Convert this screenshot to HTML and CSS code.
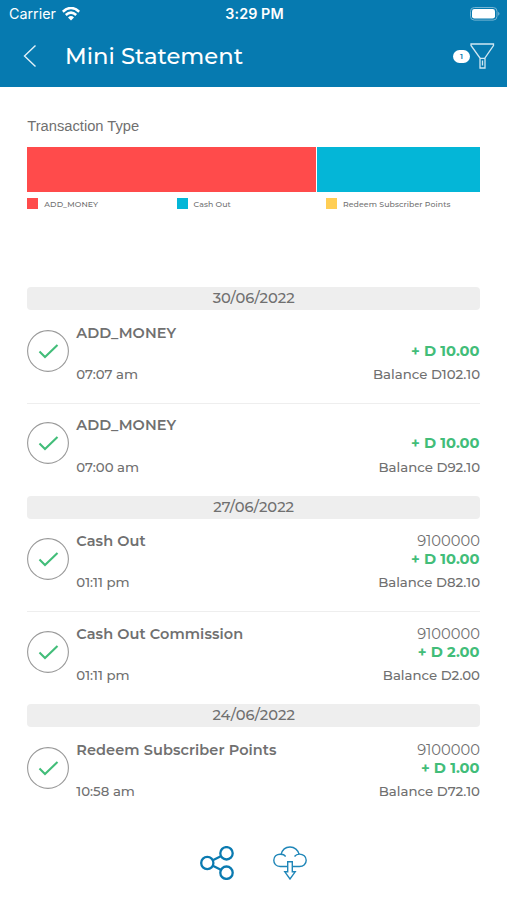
FILE: index.html
```html
<!DOCTYPE html>
<html lang="en">
<head>
<meta charset="utf-8">
<title>Mini Statement</title>
<link rel="stylesheet" href="styles.css">
</head>
<body>

<header class="header">
  <div class="status">
    <div class="carrier">
      <span>Carrier</span>
      <svg width="18" height="14" viewBox="0 0 18 14" fill="none" stroke="#fff" stroke-width="2.5"><path d="M.8 4.7Q9-2.7 17.2 4.7M3.8 8Q9 3.2 14.2 8"/><path d="M6 10.4Q9 7.8 12 10.4L9 13.5Z" fill="#fff" stroke="none"/></svg>
    </div>
    <span class="clock">3:29 PM</span>
    <svg class="battery" width="30" height="14" viewBox="0 0 30 14"><rect x=".5" y=".5" width="26.5" height="12.6" rx="3.8" fill="none" stroke="#75b5d3"/><rect x="2" y="2" width="23" height="9.6" rx="2.4" fill="#fff"/><path d="M28.2 4.8q2.6 2 0 4z" fill="#75b5d3"/></svg>
  </div>
  <div class="titlebar">
    <svg class="back" width="14" height="24" viewBox="0 0 14 24" fill="none" stroke="#e2f1f8" stroke-width="1.4"><path d="M12.5 1.5 1.5 12l11 10.5"/></svg>
    <h1>Mini Statement</h1>
    <div class="filter">
      <span class="count">1</span>
      <svg width="25" height="26" viewBox="0 0 25 26" fill="none" stroke="#d0e7f2" stroke-width="1.3"><path d="M1 1h22.5v1.5L15 15v10h-5V15L1 2.5zM10 15.3h5M12.5 17.5v5"/></svg>
    </div>
  </div>
</header>

<main class="content">
  <section class="chart">
    <h2>Transaction Type</h2>
    <div class="bar">
      <div class="segment red" style="width:288.5px"></div>
      <div class="segment cyan" style="width:163px"></div>
    </div>
    <ul class="legend">
      <li><i class="swatch red"></i><span>ADD_MONEY</span></li>
      <li><i class="swatch cyan"></i><span>Cash Out</span></li>
      <li><i class="swatch yellow"></i><span>Redeem Subscriber Points</span></li>
    </ul>
  </section>

  <section class="day">
    <div class="date">30/06/2022</div>
    <div class="row">
      <svg class="check" viewBox="0 0 42 42"><circle cx="21" cy="21" r="20.4"/><path d="m12.5 21.5 5.5 5.5L30.5 15"/></svg>
      <div class="info"><b class="name">ADD_MONEY</b><span class="time">07:07 am</span></div>
      <div class="sums"><span class="phone"></span><b class="amount">+ D 10.00</b><span class="balance">Balance D102.10</span></div>
    </div>
    <div class="row">
      <svg class="check" viewBox="0 0 42 42"><circle cx="21" cy="21" r="20.4"/><path d="m12.5 21.5 5.5 5.5L30.5 15"/></svg>
      <div class="info"><b class="name">ADD_MONEY</b><span class="time">07:00 am</span></div>
      <div class="sums"><span class="phone"></span><b class="amount">+ D 10.00</b><span class="balance">Balance D92.10</span></div>
    </div>
  </section>

  <section class="day">
    <div class="date">27/06/2022</div>
    <div class="row">
      <svg class="check" viewBox="0 0 42 42"><circle cx="21" cy="21" r="20.4"/><path d="m12.5 21.5 5.5 5.5L30.5 15"/></svg>
      <div class="info"><b class="name">Cash Out</b><span class="time">01:11 pm</span></div>
      <div class="sums"><span class="phone">9100000</span><b class="amount">+ D 10.00</b><span class="balance">Balance D82.10</span></div>
    </div>
    <div class="row">
      <svg class="check" viewBox="0 0 42 42"><circle cx="21" cy="21" r="20.4"/><path d="m12.5 21.5 5.5 5.5L30.5 15"/></svg>
      <div class="info"><b class="name">Cash Out Commission</b><span class="time">01:11 pm</span></div>
      <div class="sums"><span class="phone">9100000</span><b class="amount">+ D 2.00</b><span class="balance">Balance D2.00</span></div>
    </div>
  </section>

  <section class="day">
    <div class="date">24/06/2022</div>
    <div class="row">
      <svg class="check" viewBox="0 0 42 42"><circle cx="21" cy="21" r="20.4"/><path d="m12.5 21.5 5.5 5.5L30.5 15"/></svg>
      <div class="info"><b class="name">Redeem Subscriber Points</b><span class="time">10:58 am</span></div>
      <div class="sums"><span class="phone">9100000</span><b class="amount">+ D 1.00</b><span class="balance">Balance D72.10</span></div>
    </div>
  </section>
</main>

<footer class="actions">
  <svg width="34" height="34" viewBox="0 0 34 34" fill="none" stroke="#0a7ab0" stroke-width="2.3"><circle cx="7.3" cy="17" r="6.1"/><circle cx="26.5" cy="7.3" r="6.2"/><circle cx="26.5" cy="26.7" r="6.2"/><path d="m12.8 14.2 8-4M12.8 19.8l8 4"/></svg>
  <svg width="34" height="34" viewBox="0 0 34 34" fill="none" stroke="#1f86b8" stroke-width="1.4"><path d="M14 20.5H7.2C3 20.5.8 17.6.8 14.2c0-3.6 2.8-6 6.3-6 .9 0 1.8.2 2.5.5M8.2 8.4C9.2 4 12.6 1 17 1c4.6 0 8.2 3.2 9 7.2M21.5 10.5c1.2-1.6 3-2.4 5-2.4 3.7 0 6.7 2.5 6.7 6.1 0 3.5-2.7 6.3-6.7 6.3H20M8 8.3c2 0 3.6.8 4.7 2.2"/><path d="M14.7 15.8h4.6v10h2.9L17 33l-5.2-7.2h2.9z"/></svg>
</footer>

</body>
</html>
```
FILE: styles.css
```css
body {
  margin: 0;
  background: #fff;
  color: #707070;
  font-family: "Montserrat", Inter, sans-serif;
}
h1, h2, ul {
  margin: 0;
  padding: 0;
  font-weight: normal;
}
svg {
  display: block;
  flex: none;
}

/* header */
.header {
  height: 86.5px;
  background: #067ab0;
  color: #fff;
}
.status {
  display: grid;
  grid-template-columns: 1fr auto 1fr;
  align-items: center;
  height: 27px;
  padding: 0 7px 0 9px;
  font-family: Inter, sans-serif;
  font-size: 14.3px;
}
.carrier {
  display: flex;
  align-items: center;
  gap: 6px;
}
.clock {
  font-weight: 600;
  letter-spacing: .1px;
}
.battery {
  justify-self: end;
}
.titlebar {
  display: flex;
  align-items: center;
  height: 58px;
  padding: 0 12px 0 23px;
}
.titlebar h1 {
  flex: 1;
  margin-left: 28px;
  font-size: 22.7px;
  font-weight: 500;
  line-height: 30px;
}
.filter {
  display: flex;
  align-items: center;
}
.count {
  width: 17px;
  height: 13px;
  border-radius: 7px;
  background: #fff;
  color: #067ab0;
  font-size: 8px;
  font-weight: 600;
  line-height: 13px;
  text-align: center;
}

/* chart */
.content {
  padding: 0 27px 0 27.3px;
}
.chart {
  height: 200.5px;
  box-sizing: border-box;
  padding-top: 31px;
}
.chart h2 {
  font-family: "Liberation Sans", Arial, sans-serif;
  font-size: 14.7px;
  line-height: 17px;
}
.bar {
  display: flex;
  justify-content: space-between;
  height: 45px;
  margin-top: 12px;
}
.red { background: #ff4b4b; }
.cyan { background: #04b6d7; }
.yellow { background: #ffce54; }
.legend {
  display: grid;
  grid-template-columns: repeat(3, 149.3px);
  margin-top: 6px;
  list-style: none;
  font-size: 7.8px;
  font-weight: 500;
  line-height: 12px;
  letter-spacing: .1px;
}
.legend li {
  display: flex;
  align-items: center;
  gap: 6px;
  white-space: nowrap;
}
.swatch {
  width: 11px;
  height: 11px;
}

/* statement */
.date {
  height: 23px;
  border-radius: 4px;
  background: #eee;
  font-size: 14.7px;
  font-weight: 500;
  line-height: 23px;
  text-align: center;
}
.row {
  display: flex;
  height: 92.8px;
  box-sizing: border-box;
  padding-top: 13.6px;
}
.row + .row {
  border-top: 1px solid #eee;
  padding-top: 12.6px;
}
.check {
  width: 42px;
  height: 42px;
  margin-top: 6px;
  fill: none;
}
.check circle {
  stroke: #999;
  stroke-width: 1.1;
}
.check path {
  stroke: #42bd79;
  stroke-width: 2.1;
}
.info, .sums {
  display: flex;
  flex-direction: column;
  line-height: 18px;
  white-space: nowrap;
}
.info {
  flex: 1;
  margin-left: 7px;
}
.sums {
  text-align: right;
}
.name {
  font-size: 14.5px;
  font-weight: 600;
  letter-spacing: .08px;
}
.time {
  margin-top: 23.3px;
  font-size: 13.3px;
  font-weight: 500;
}
.phone {
  height: 18px;
  font-size: 14.7px;
}
.amount {
  padding-right: .5px;
  color: #42bd79;
  font-size: 14.7px;
  font-weight: 700;
}
.balance {
  margin-top: 5.3px;
  font-size: 13.3px;
  font-weight: 500;
}

/* footer */
.actions {
  display: flex;
  justify-content: center;
  gap: 39px;
  margin-top: 26px;
}
```
